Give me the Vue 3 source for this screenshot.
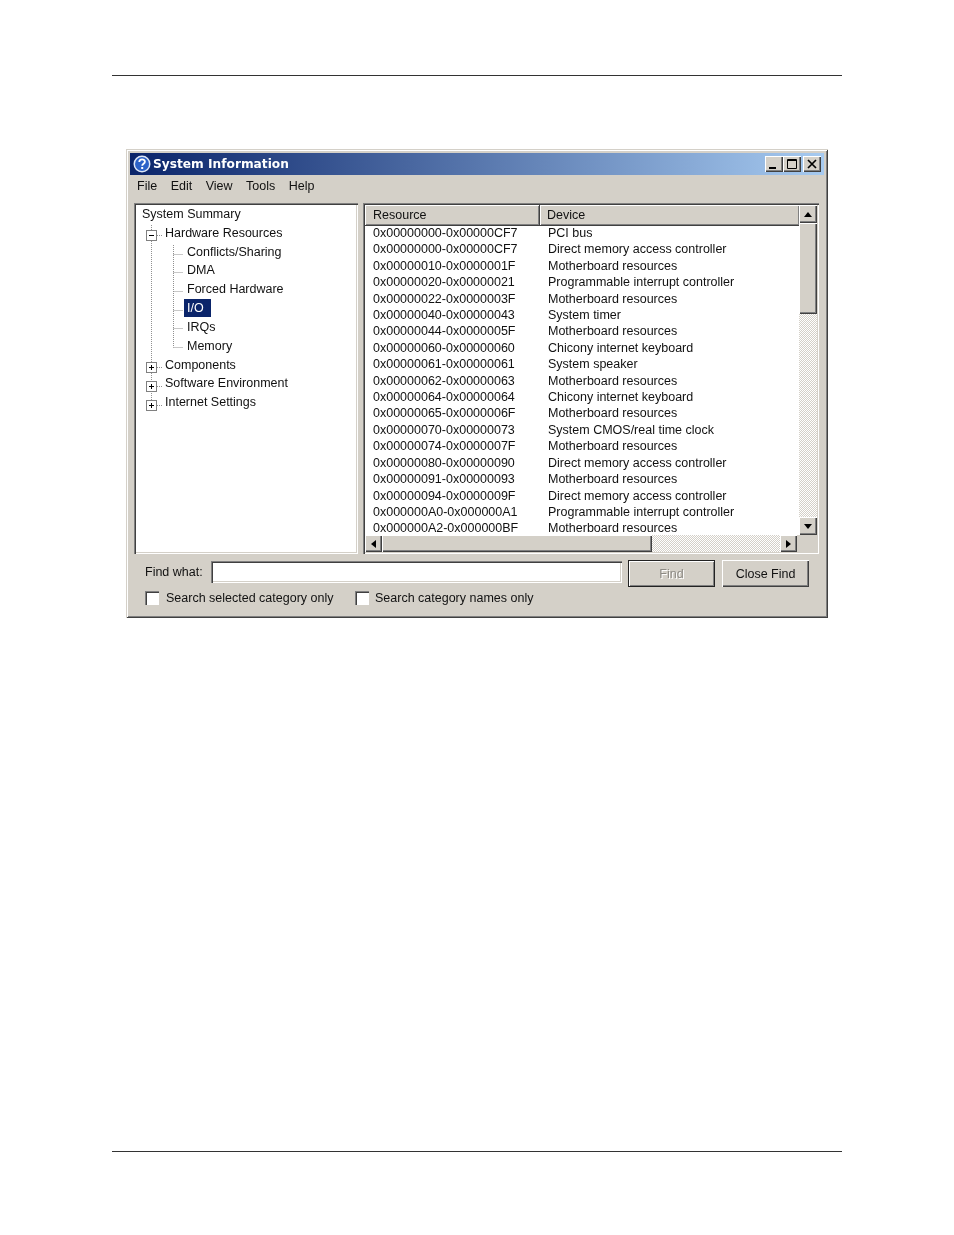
<script setup>
const tree = [
  { label: 'System Summary', level: 0 },
  { label: 'Hardware Resources', level: 1 },
  { label: 'Conflicts/Sharing', level: 2 },
  { label: 'DMA', level: 2 },
  { label: 'Forced Hardware', level: 2 },
  { label: 'I/O', level: 2, selected: true },
  { label: 'IRQs', level: 2 },
  { label: 'Memory', level: 2 },
  { label: 'Components', level: 1 },
  { label: 'Software Environment', level: 1 },
  { label: 'Internet Settings', level: 1 }
]
const boxes = [
  { y: 30, open: true },
  { y: 162 },
  { y: 181 },
  { y: 200 }
]
const stubs = [49, 67, 86, 105, 123, 142]
const DMA = 'Direct memory access controller'
const MB = 'Motherboard resources'
const PIC = 'Programmable interrupt controller'
const KB = 'Chicony internet keyboard'
const rows = [
  ['0x00000000-0x00000CF7', 'PCI bus'],
  ['0x00000000-0x00000CF7', DMA],
  ['0x00000010-0x0000001F', MB],
  ['0x00000020-0x00000021', PIC],
  ['0x00000022-0x0000003F', MB],
  ['0x00000040-0x00000043', 'System timer'],
  ['0x00000044-0x0000005F', MB],
  ['0x00000060-0x00000060', KB],
  ['0x00000061-0x00000061', 'System speaker'],
  ['0x00000062-0x00000063', MB],
  ['0x00000064-0x00000064', KB],
  ['0x00000065-0x0000006F', MB],
  ['0x00000070-0x00000073', 'System CMOS/real time clock'],
  ['0x00000074-0x0000007F', MB],
  ['0x00000080-0x00000090', DMA],
  ['0x00000091-0x00000093', MB],
  ['0x00000094-0x0000009F', DMA],
  ['0x000000A0-0x000000A1', PIC],
  ['0x000000A2-0x000000BF', MB]
]
</script>

<template>
  <div class="page">
    <div class="rule"></div>
    <div class="window">
      <div class="title">
        <svg class="app-icon" width="18" height="18" viewBox="0 0 18 18">
          <circle cx="9" cy="9" r="8.5" fill="#dfe8f8" />
          <circle cx="9" cy="9" r="7" fill="#2c62c8" />
          <path d="M6.3 7c0-3.4 5.6-3.4 5.6-.2 0 2-2.7 2-2.7 4" fill="none" stroke="#fff" stroke-width="1.8" />
          <rect x="8.2" y="12" width="2" height="2" fill="#fff" />
        </svg>
        <span class="title-text">System Information</span>
        <div class="controls">
          <button class="ctl"><svg width="16" height="14" viewBox="0 0 16 14"><rect x="3" y="10" width="7" height="2" fill="#000" /></svg></button>
          <button class="ctl"><svg width="16" height="14" viewBox="0 0 16 14"><path d="M3.5 2.5h9v9h-9zM3 3.5h10" fill="none" stroke="#000" /></svg></button>
          <button class="ctl close"><svg width="16" height="14" viewBox="0 0 16 14"><path d="M4 3l8 8M12 3l-8 8" stroke="#000" stroke-width="1.7" /></svg></button>
        </div>
      </div>

      <div class="menu">
        <span>File</span><span>Edit</span><span>View</span><span>Tools</span><span>Help</span>
      </div>

      <div class="panes">
        <div class="tree sunken">
          <svg class="connectors" width="220" height="347" viewBox="0 0 220 347">
            <g stroke="#909090" stroke-dasharray="1 1" fill="none">
              <path d="M15.5 20v180" />
              <path d="M37.5 40v102.5" />
              <path v-for="y in stubs" :key="y" :d="`M37.5 ${y + 0.5}h9`" />
              <path v-for="b in boxes" :key="b.y" :d="`M21 ${b.y + 0.5}h5`" />
            </g>
            <g v-for="b in boxes" :key="'b' + b.y">
              <rect x="10.5" :y="b.y - 4.5" width="10" height="10" fill="#fff" stroke="#808080" />
              <path :d="`M13 ${b.y + 0.5}h5`" stroke="#000" />
              <path v-if="!b.open" :d="`M15.5 ${b.y - 2}v5`" stroke="#000" />
            </g>
          </svg>
          <div
            v-for="item in tree"
            :key="item.label"
            class="node"
            :class="'lv' + item.level"
          >
            <span :class="{ selected: item.selected }">{{ item.label }}</span>
          </div>
        </div>

        <div class="list sunken">
          <div class="list-main">
            <div class="list-col">
              <div class="head">
                <div class="hcell res">Resource</div>
                <div class="hcell dev">Device</div>
              </div>
              <div class="rows">
                <div v-for="(r, i) in rows" :key="i" class="row">
                  <span class="c1">{{ r[0] }}</span>
                  <span class="c2">{{ r[1] }}</span>
                </div>
              </div>
            </div>
            <div class="vscroll">
              <div class="sbtn"><i class="arrow up"></i></div>
              <div class="vthumb raised"></div>
              <div class="track"></div>
              <div class="sbtn"><i class="arrow down"></i></div>
            </div>
          </div>
          <div class="hscroll">
            <div class="sbtn"><i class="arrow left"></i></div>
            <div class="hthumb raised"></div>
            <div class="track"></div>
            <div class="sbtn"><i class="arrow right"></i></div>
            <div class="corner"></div>
          </div>
        </div>
      </div>

      <div class="find">
        <label class="find-label">Find what:</label>
        <div class="input"></div>
        <button class="btn default">Find</button>
        <button class="btn">Close Find</button>
      </div>
      <div class="checks">
        <span class="check"><i class="box"></i>Search selected category only</span>
        <span class="check"><i class="box"></i>Search category names only</span>
      </div>
    </div>
    <div class="rule bottom"></div>
  </div>
</template>

<style scoped>
.page {
  width: 954px;
  height: 1235px;
  padding-top: 75px;
  box-sizing: border-box;
  background: #fff;
  font-family: "Liberation Sans", Arial, sans-serif;
  font-size: 12.5px;
  color: #111;
  overflow: hidden;
}
.rule {
  width: 730px;
  height: 1px;
  margin-left: 112px;
  background: #333;
}
.rule.bottom { margin-top: 533px; }
.window {
  width: 702px;
  height: 469px;
  margin: 73px 0 0 126px;
  box-sizing: border-box;
  padding: 4px;
  background: #d4d0c8;
  box-shadow: inset 1px 1px 0 #d4d0c8, inset -1px -1px 0 #404040, inset 2px 2px 0 #fff, inset -2px -2px 0 #808080;
  filter: blur(0.35px);
}
.title {
  height: 22px;
  display: flex;
  align-items: center;
  background: linear-gradient(90deg, #0a246a, #a6caf0);
  padding: 0 3px;
}
.app-icon { flex: none; }
.title-text {
  margin-left: 2px;
  color: #fff;
  font: bold 12.2px "DejaVu Sans", Verdana, sans-serif;
}
.controls {
  margin-left: auto;
  display: flex;
  margin-right: 0;
}
.ctl {
  width: 18px;
  height: 16px;
  padding: 0;
  border: 0;
  display: flex;
  align-items: center;
  justify-content: center;
  background: #d4d0c8;
  box-shadow: inset 1px 1px 0 #fff, inset -1px -1px 0 #404040, inset -2px -2px 0 #808080;
}
.ctl.close { margin-left: 2px; }
.menu {
  height: 22px;
  display: flex;
  align-items: center;
  gap: 13.5px;
  padding-left: 7px;
}
.panes {
  display: flex;
  gap: 5px;
  margin: 6px 5px 0 4px;
  height: 351px;
}
.sunken {
  box-sizing: border-box;
  box-shadow: inset 1px 1px 0 #808080, inset 2px 2px 0 #404040, inset -1px -1px 0 #fff, inset -2px -2px 0 #d4d0c8;
}
.tree {
  position: relative;
  width: 224px;
  background: #fff;
  padding-top: 2px;
}
.connectors {
  position: absolute;
  left: 2px;
  top: 2px;
}
.node {
  position: relative;
  height: 18.82px;
  line-height: 18.82px;
  white-space: nowrap;
}
.lv0 { padding-left: 8px; }
.lv1 { padding-left: 31px; }
.lv2 { padding-left: 53px; }
.selected {
  display: inline-block;
  width: 27px;
  height: 18px;
  margin-left: -3px;
  padding-left: 3px;
  box-sizing: border-box;
  background: #0a246a;
  color: #fff;
}
.list {
  width: 456px;
  display: flex;
  flex-direction: column;
  padding: 2px;
  background: #d4d0c8;
}
.list-main {
  display: flex;
  height: 330px;
}
.list-col {
  flex: 1;
  min-width: 0;
  display: flex;
  flex-direction: column;
  background: #fff;
}
.head {
  display: flex;
  height: 20px;
  flex: none;
  background: #d4d0c8;
}
.hcell {
  box-sizing: border-box;
  line-height: 21px;
  box-shadow: inset 1px 1px 0 #fff, inset -1px -1px 0 #808080, 0 1px 0 #404040;
}
.res { width: 175px; padding-left: 8px; border-right: 1px solid #404040; }
.dev { flex: 1; padding-left: 7px; }
.rows {
  flex: 1;
  overflow: hidden;
}
.row {
  height: 16.42px;
  line-height: 16.42px;
  display: flex;
  white-space: nowrap;
}
.c1 { width: 175px; padding-left: 8px; box-sizing: border-box; }
.c2 { padding-left: 8px; }
.vscroll {
  width: 18px;
  flex: none;
  display: flex;
  flex-direction: column;
}
.sbtn {
  flex: none;
  width: 18px;
  height: 18px;
  display: flex;
  align-items: center;
  justify-content: center;
  background: #d4d0c8;
  box-sizing: border-box;
  box-shadow: inset 1px 1px 0 #fff, inset -1px -1px 0 #404040, inset -2px -2px 0 #808080;
}
.raised {
  background: #d4d0c8;
  box-shadow: inset 1px 1px 0 #fff, inset -1px -1px 0 #404040, inset -2px -2px 0 #808080;
}
.vthumb { height: 91px; flex: none; }
.track {
  flex: 1;
  background: repeating-conic-gradient(#fff 0 25%, #d4d0c8 0 50%) 0 0 / 2px 2px;
}
.hscroll {
  display: flex;
  height: 17px;
  flex: none;
}
.hscroll .sbtn { height: 17px; width: 17px; }
.hthumb { width: 270px; flex: none; }
.corner { width: 20px; flex: none; background: #d4d0c8; }
.arrow {
  display: block;
  width: 0;
  height: 0;
  border: 4px solid transparent;
}
.up { border-top: 0; border-bottom: 5px solid #000; }
.down { border-bottom: 0; border-top: 5px solid #000; }
.left { border-left: 0; border-right: 5px solid #000; }
.right { border-right: 0; border-left: 5px solid #000; }
.find {
  display: flex;
  align-items: flex-start;
  margin-top: 6px;
  padding-left: 15px;
  height: 27px;
}
.find-label {
  width: 66px;
  flex: none;
  line-height: 24px;
}
.input {
  width: 411px;
  height: 22px;
  margin-top: 1px;
  flex: none;
  box-sizing: border-box;
  background: #fff;
  box-shadow: inset 1px 1px 0 #808080, inset 2px 2px 0 #404040, inset -1px -1px 0 #fff, inset -2px -2px 0 #d4d0c8;
}
.btn {
  width: 87px;
  height: 27px;
  padding: 0;
  margin-left: 7px;
  border: 0;
  flex: none;
  font: inherit;
  color: #111;
  background: #d4d0c8;
  box-shadow: inset 1px 1px 0 #fff, inset -1px -1px 0 #404040, inset -2px -2px 0 #808080;
}
.btn.default {
  margin-left: 6px;
  color: #8d8a84;
  text-shadow: 1px 1px 0 #fff;
  box-shadow: inset 0 0 0 1px #222, inset 2px 2px 0 #fff, inset -2px -2px 0 #808080;
}
.checks {
  display: flex;
  align-items: center;
  margin-top: 3px;
  padding-left: 15px;
  height: 16px;
}
.check {
  display: flex;
  align-items: center;
  width: 210px;
  white-space: nowrap;
}
.box {
  flex: none;
  width: 14px;
  height: 14px;
  margin-right: 7px;
  box-sizing: border-box;
  background: #fff;
  box-shadow: inset 1px 1px 0 #808080, inset 2px 2px 0 #404040, inset -1px -1px 0 #fff;
}
.check + .check .box { margin-right: 6px; }
</style>
